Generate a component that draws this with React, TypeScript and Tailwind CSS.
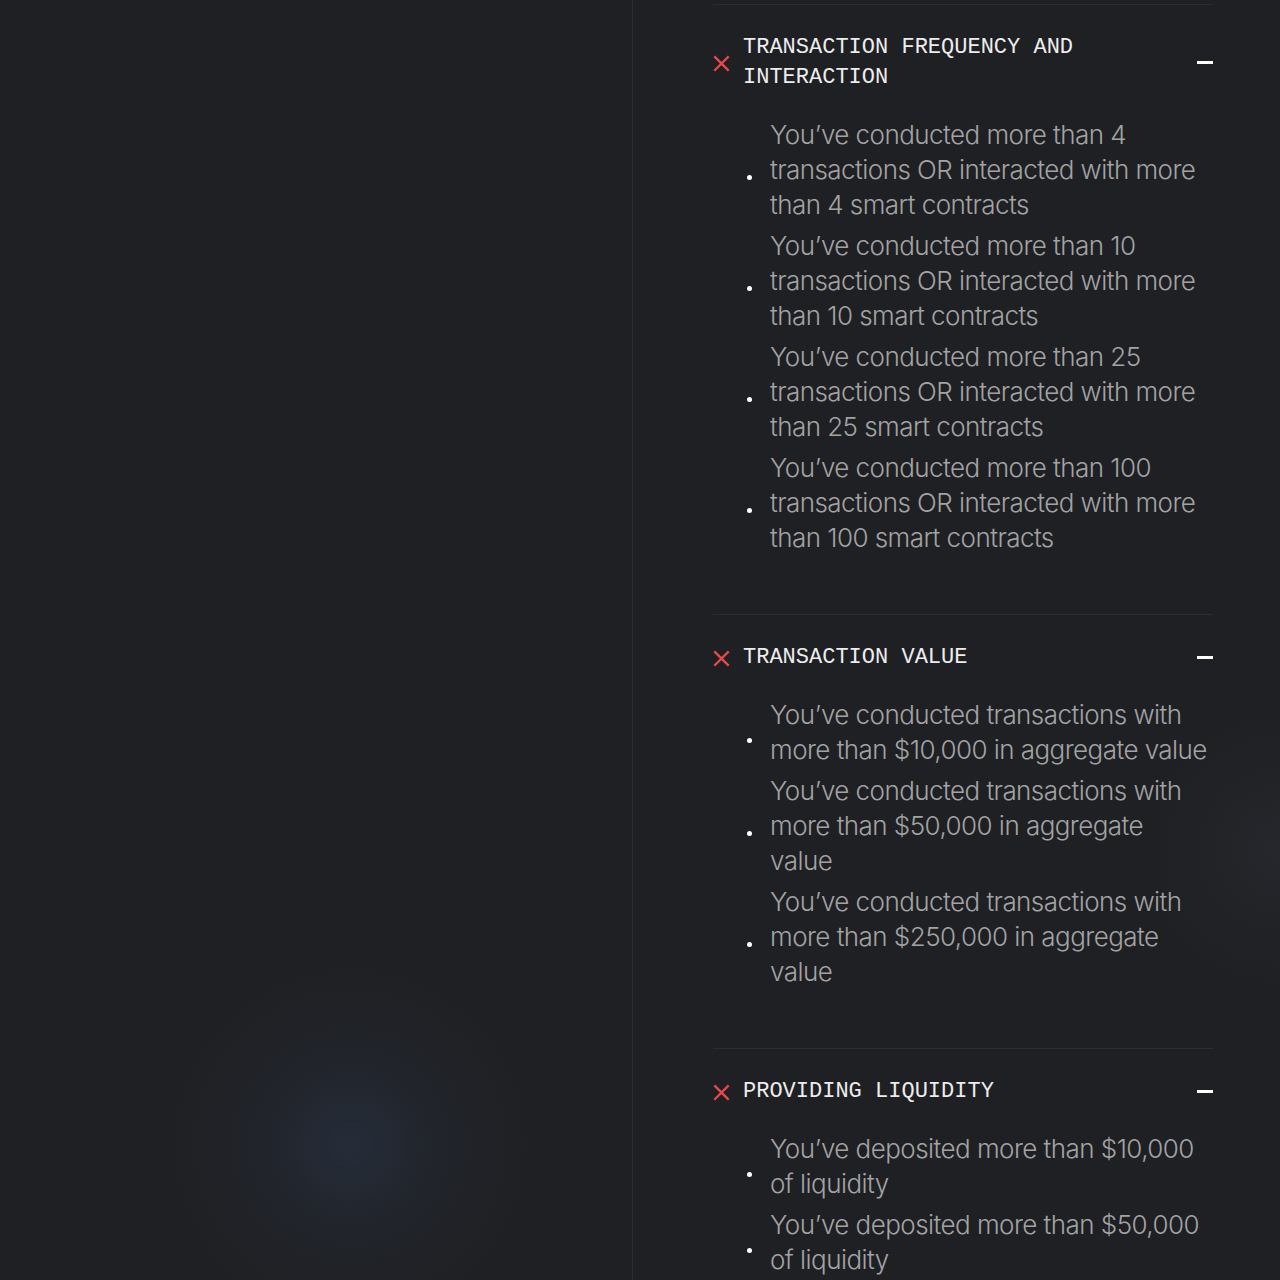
const sections = [
  {
    title: "TRANSACTION FREQUENCY AND INTERACTION",
    items: [
      "You’ve conducted more than 4 transactions OR interacted with more than 4 smart contracts",
      "You’ve conducted more than 10 transactions OR interacted with more than 10 smart contracts",
      "You’ve conducted more than 25 transactions OR interacted with more than 25 smart contracts",
      "You’ve conducted more than 100 transactions OR interacted with more than 100 smart contracts",
    ],
  },
  {
    title: "TRANSACTION VALUE",
    items: [
      "You’ve conducted transactions with more than $10,000 in aggregate value",
      "You’ve conducted transactions with more than $50,000 in aggregate value",
      "You’ve conducted transactions with more than $250,000 in aggregate value",
    ],
  },
  {
    title: "PROVIDING LIQUIDITY",
    items: [
      "You’ve deposited more than $10,000 of liquidity",
      "You’ve deposited more than $50,000 of liquidity",
    ],
  },
];

const CrossIcon = () => (
  <svg width="17" height="17" viewBox="0 0 16 16" className="shrink-0">
    <path d="M2 2L14 14M14 2L2 14" stroke="#e5484d" strokeWidth="2.2" strokeLinecap="square" />
  </svg>
);

const App = () => {
  return (
    <div className="h-[1280px] w-[1280px] overflow-hidden bg-[#1f2023] flex font-['Inter',sans-serif]">
      <div className="relative w-[633px] shrink-0 border-r border-[#2c2d31]">
        <div className="absolute left-[170px] top-[965px] h-[360px] w-[360px] rounded-full bg-[radial-gradient(circle,rgba(38,46,60,0.9)_0%,rgba(35,40,50,0.6)_30%,rgba(31,32,35,0)_70%)]" />
      </div>

      <div className="relative flex-1">
        <div className="absolute right-[-120px] top-[700px] h-[300px] w-[240px] rounded-full bg-[radial-gradient(circle,rgba(40,42,48,0.7)_0%,rgba(31,32,35,0)_70%)]" />
        <div className="relative ml-[80px] w-[500px] pt-[4px]">
          {sections.map((section) => (
            <div key={section.title} className="border-t border-[#2c2d31] pt-[28px] pb-[59px]">
              <div className="flex items-center justify-between">
                <div className="flex items-center gap-[13px]">
                  <CrossIcon />
                  <h3 className="max-w-[360px] font-['Liberation_Mono',monospace] text-[22px] leading-[30px] text-[#ededed]">
                    {section.title}
                  </h3>
                </div>
                <div className="h-[3px] w-[16px] -translate-y-[1px] bg-white" />
              </div>
              <ul className="mt-[24px] flex flex-col gap-[6px] pl-[34px]">
                {section.items.map((item) => (
                  <li key={item} className="flex items-center gap-[18px]">
                    <span className="h-[5px] w-[5px] shrink-0 translate-y-[8px] rounded-full bg-white" />
                    <span className="max-w-[440px] text-[26px] leading-[35px] font-light tracking-[-0.55px] text-[#a3a3a3]">
                      {item}
                    </span>
                  </li>
                ))}
              </ul>
            </div>
          ))}
        </div>
      </div>
    </div>
  );
};

export default App;
